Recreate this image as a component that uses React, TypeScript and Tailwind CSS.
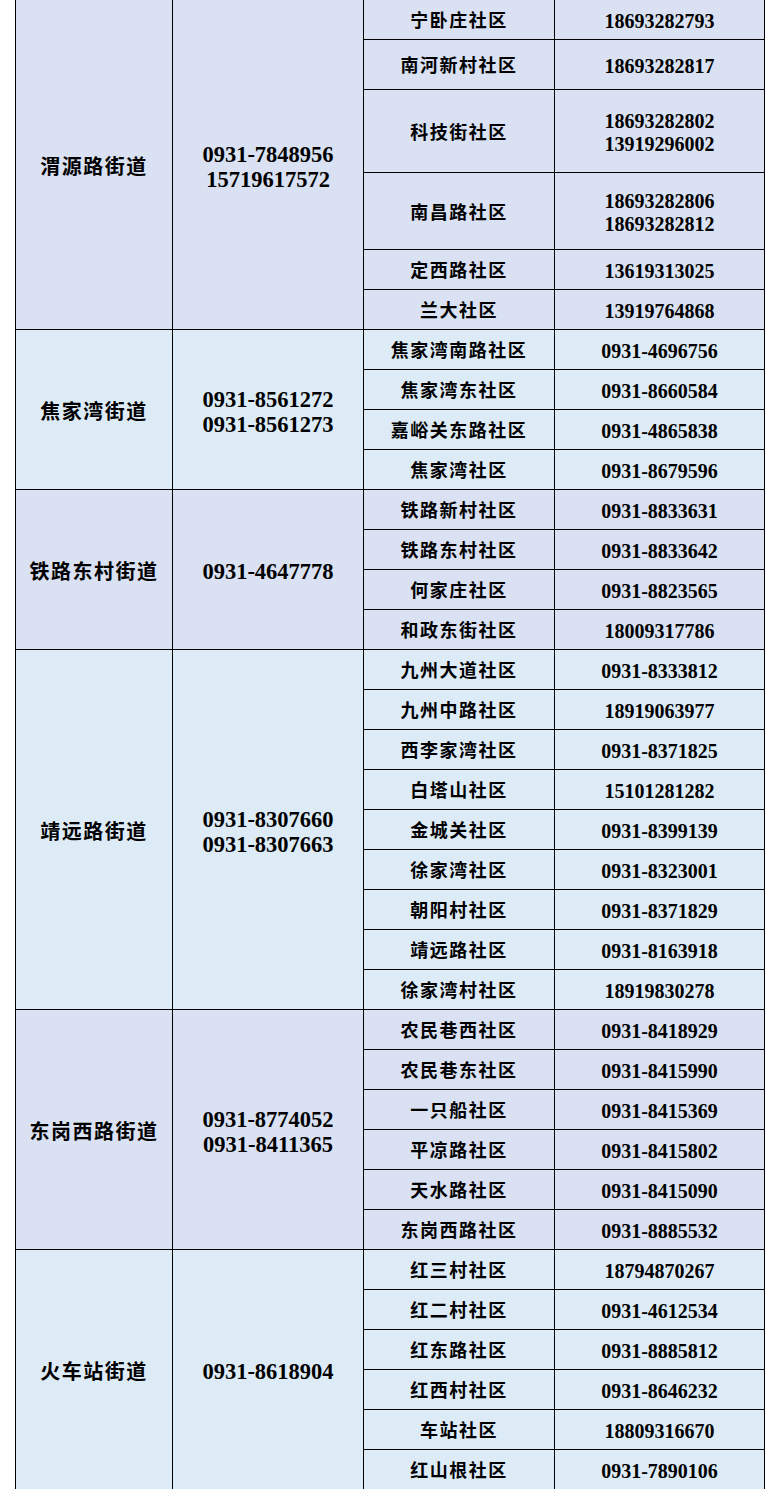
type Row = { name: string; phones: string[]; h?: string };
type Group = { name: string; phones: string[]; bg: string; rows: Row[] };

const lav = 'bg-[#d9e1f2]';
const blue = 'bg-[#ddebf7]';

const groups: Group[] = [
  {
    name: '渭源路街道',
    phones: ['0931-7848956', '15719617572'],
    bg: lav,
    rows: [
      { name: '宁卧庄社区', phones: ['18693282793'] },
      { name: '南河新村社区', phones: ['18693282817'], h: 'h-[50px]' },
      { name: '科技街社区', phones: ['18693282802', '13919296002'], h: 'h-[83px]' },
      { name: '南昌路社区', phones: ['18693282806', '18693282812'], h: 'h-[77px]' },
      { name: '定西路社区', phones: ['13619313025'] },
      { name: '兰大社区', phones: ['13919764868'] },
    ],
  },
  {
    name: '焦家湾街道',
    phones: ['0931-8561272', '0931-8561273'],
    bg: blue,
    rows: [
      { name: '焦家湾南路社区', phones: ['0931-4696756'] },
      { name: '焦家湾东社区', phones: ['0931-8660584'] },
      { name: '嘉峪关东路社区', phones: ['0931-4865838'] },
      { name: '焦家湾社区', phones: ['0931-8679596'] },
    ],
  },
  {
    name: '铁路东村街道',
    phones: ['0931-4647778'],
    bg: lav,
    rows: [
      { name: '铁路新村社区', phones: ['0931-8833631'] },
      { name: '铁路东村社区', phones: ['0931-8833642'] },
      { name: '何家庄社区', phones: ['0931-8823565'] },
      { name: '和政东街社区', phones: ['18009317786'] },
    ],
  },
  {
    name: '靖远路街道',
    phones: ['0931-8307660', '0931-8307663'],
    bg: blue,
    rows: [
      { name: '九州大道社区', phones: ['0931-8333812'] },
      { name: '九州中路社区', phones: ['18919063977'] },
      { name: '西李家湾社区', phones: ['0931-8371825'] },
      { name: '白塔山社区', phones: ['15101281282'] },
      { name: '金城关社区', phones: ['0931-8399139'] },
      { name: '徐家湾社区', phones: ['0931-8323001'] },
      { name: '朝阳村社区', phones: ['0931-8371829'] },
      { name: '靖远路社区', phones: ['0931-8163918'] },
      { name: '徐家湾村社区', phones: ['18919830278'] },
    ],
  },
  {
    name: '东岗西路街道',
    phones: ['0931-8774052', '0931-8411365'],
    bg: lav,
    rows: [
      { name: '农民巷西社区', phones: ['0931-8418929'] },
      { name: '农民巷东社区', phones: ['0931-8415990'] },
      { name: '一只船社区', phones: ['0931-8415369'] },
      { name: '平凉路社区', phones: ['0931-8415802'] },
      { name: '天水路社区', phones: ['0931-8415090'] },
      { name: '东岗西路社区', phones: ['0931-8885532'] },
    ],
  },
  {
    name: '火车站街道',
    phones: ['0931-8618904'],
    bg: blue,
    rows: [
      { name: '红三村社区', phones: ['18794870267'] },
      { name: '红二村社区', phones: ['0931-4612534'] },
      { name: '红东路社区', phones: ['0931-8885812'] },
      { name: '红西村社区', phones: ['0931-8646232'] },
      { name: '车站社区', phones: ['18809316670'] },
      { name: '红山根社区', phones: ['0931-7890106'] },
    ],
  },
];

const font = { fontFamily: '"Liberation Serif", "Noto Sans CJK SC", serif' };

export default function App() {
  return (
    <div className="min-h-screen bg-white text-black" style={font}>
      <div className="ml-[15px] w-[750px] border-l border-r border-black">
        {groups.map((g) => (
          <div key={g.name} className={`flex ${g.bg}`}>
            <div className="w-[157px] shrink-0 border-r border-b border-black pt-[4px] flex items-center justify-center text-[20px] font-bold tracking-[1.5px]">
              {g.name}
            </div>
            <div className="w-[191px] shrink-0 border-r border-b border-black pt-[4px] flex flex-col items-center justify-center text-[22.5px] leading-[25px] font-bold">
              {g.phones.map((p) => (
                <div key={p}>{p}</div>
              ))}
            </div>
            <div className="flex-1 flex flex-col">
              {g.rows.map((r) => (
                <div key={r.name} className={`flex ${r.h ?? 'h-[40px]'} border-b border-black`}>
                  <div className="w-[191px] shrink-0 border-r border-black pt-[4px] flex items-center justify-center text-[18px] font-bold tracking-[1.5px]">
                    {r.name}
                  </div>
                  <div className="flex-1 pt-[4px] flex flex-col items-center justify-center text-[20px] leading-[23px] font-bold">
                    {r.phones.map((p) => (
                      <div key={p}>{p}</div>
                    ))}
                  </div>
                </div>
              ))}
            </div>
          </div>
        ))}
      </div>
    </div>
  );
}
